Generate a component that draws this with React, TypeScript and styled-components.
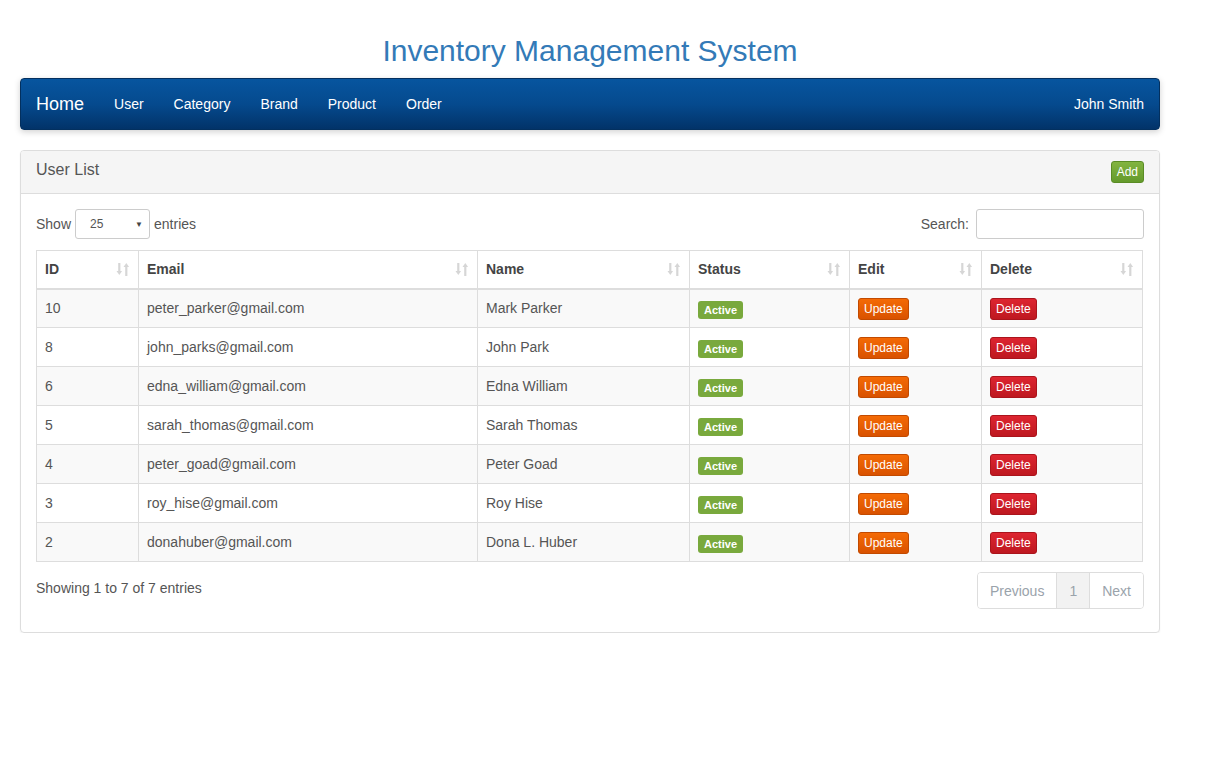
import styled, { createGlobalStyle } from "styled-components";

const GlobalStyle = createGlobalStyle`
  body {
    margin: 0;
    background: #fff;
    font-family: "Liberation Sans", Arial, sans-serif;
    font-size: 14px;
    color: #333;
  }
  * { box-sizing: border-box; }
`;

interface User {
  id: number;
  email: string;
  name: string;
}

const users: User[] = [
  { id: 10, email: "peter_parker@gmail.com", name: "Mark Parker" },
  { id: 8, email: "john_parks@gmail.com", name: "John Park" },
  { id: 6, email: "edna_william@gmail.com", name: "Edna William" },
  { id: 5, email: "sarah_thomas@gmail.com", name: "Sarah Thomas" },
  { id: 4, email: "peter_goad@gmail.com", name: "Peter Goad" },
  { id: 3, email: "roy_hise@gmail.com", name: "Roy Hise" },
  { id: 2, email: "donahuber@gmail.com", name: "Dona L. Huber" },
];

const columns = [
  { label: "ID", width: 102 },
  { label: "Email", width: 339 },
  { label: "Name", width: 212 },
  { label: "Status", width: 160 },
  { label: "Edit", width: 132 },
  { label: "Delete", width: 161 },
];

const navLinks = ["User", "Category", "Brand", "Product", "Order"];

const SortIcon = () => (
  <svg width="14" height="14" viewBox="0 0 14 14">
    <g fill="#d6d6d6">
      <rect x="2.2" y="1" width="2.2" height="9" />
      <polygon points="0.5,9 6.1,9 3.3,13" />
      <rect x="9.2" y="4" width="2.2" height="10" />
      <polygon points="7.5,5 13.1,5 10.3,1" />
    </g>
  </svg>
);

export default function App() {
  return (
    <>
      <GlobalStyle />
      <Page>
        <Title>Inventory Management System</Title>
        <Navbar>
          <NavLeft>
            <Brand>Home</Brand>
            {navLinks.map((l) => (
              <NavLink key={l}>{l}</NavLink>
            ))}
          </NavLeft>
          <NavLink>John Smith</NavLink>
        </Navbar>

        <Panel>
          <PanelHeading>
            <PanelTitle>User List</PanelTitle>
            <Btn $variant="add">Add</Btn>
          </PanelHeading>
          <PanelBody>
            <ControlsRow>
              <Control>
                Show
                <SelectBox>
                  <span>25</span>
                  <Caret>▼</Caret>
                </SelectBox>
                entries
              </Control>
              <Control>
                Search:
                <SearchInput />
              </Control>
            </ControlsRow>

            <Table>
              <colgroup>
                {columns.map((c) => (
                  <col key={c.label} style={{ width: c.width }} />
                ))}
              </colgroup>
              <thead>
                <tr>
                  {columns.map((c) => (
                    <Th key={c.label}>
                      <ThInner>
                        {c.label}
                        <SortIcon />
                      </ThInner>
                    </Th>
                  ))}
                </tr>
              </thead>
              <tbody>
                {users.map((u, i) => (
                  <Row key={u.id} $striped={i % 2 === 0}>
                    <Td>{u.id}</Td>
                    <Td>{u.email}</Td>
                    <Td>{u.name}</Td>
                    <Td $action>
                      <Label>Active</Label>
                    </Td>
                    <Td $action>
                      <Btn $variant="update">Update</Btn>
                    </Td>
                    <Td $action>
                      <Btn $variant="delete">Delete</Btn>
                    </Td>
                  </Row>
                ))}
              </tbody>
            </Table>

            <FooterRow>
              <Info>Showing 1 to 7 of 7 entries</Info>
              <Pagination>
                <PageItem>Previous</PageItem>
                <PageItem $active>1</PageItem>
                <PageItem>Next</PageItem>
              </Pagination>
            </FooterRow>
          </PanelBody>
        </Panel>
      </Page>
    </>
  );
}

const Page = styled.div`
  width: 1140px;
  margin-left: 20px;
  padding-top: 34px;
`;

const Title = styled.h1`
  margin: 0 0 11px;
  font-size: 30px;
  font-weight: 400;
  line-height: 33px;
  color: #337ab7;
  text-align: center;
`;

const Navbar = styled.nav`
  display: flex;
  justify-content: space-between;
  align-items: center;
  height: 52px;
  border: 1px solid #03305f;
  border-radius: 4px;
  background: linear-gradient(to bottom, #07559f 0%, #054a8e 50%, #023369 100%);
  box-shadow: 0 2px 6px rgba(0, 0, 0, 0.18);
  margin-bottom: 20px;
`;

const NavLeft = styled.div`
  display: flex;
  align-items: center;
`;

const Brand = styled.span`
  padding: 15px;
  font-size: 18px;
  line-height: 20px;
  color: #fff;
`;

const NavLink = styled.span`
  padding: 15px;
  font-size: 14px;
  line-height: 20px;
  color: #fff;
`;

const Panel = styled.div`
  border: 1px solid #ddd;
  border-radius: 4px;
  box-shadow: 0 1px 2px rgba(0, 0, 0, 0.06);
`;

const PanelHeading = styled.div`
  display: flex;
  justify-content: space-between;
  align-items: center;
  height: 43px;
  padding: 0 15px;
  background: #f5f5f5;
  border-bottom: 1px solid #ddd;
  border-radius: 3px 3px 0 0;
`;

const PanelTitle = styled.span`
  font-size: 16px;
  color: #555;
  margin-top: -4px;
`;

const PanelBody = styled.div`
  padding: 15px 15px 15px;
`;

const ControlsRow = styled.div`
  display: flex;
  justify-content: space-between;
  align-items: center;
  margin-bottom: 11px;
`;

const Control = styled.label`
  display: flex;
  align-items: center;
  gap: 4px;
  color: #555;
`;

const SelectBox = styled.div`
  display: flex;
  justify-content: space-between;
  align-items: center;
  width: 75px;
  height: 30px;
  padding: 0 6px 0 14px;
  border: 1px solid #ccc;
  border-radius: 3px;
  font-size: 12px;
  color: #555;
`;

const Caret = styled.span`
  font-size: 8px;
  color: #444;
`;

const SearchInput = styled.div`
  width: 168px;
  height: 30px;
  margin-left: 3px;
  border: 1px solid #ccc;
  border-radius: 3px;
`;

const Table = styled.table`
  width: 1106px;
  table-layout: fixed;
  border-collapse: collapse;
  border: 1px solid #ddd;
`;

const Th = styled.th`
  padding: 8px;
  height: 38px;
  text-align: left;
  font-weight: 700;
  color: #444;
  line-height: 20px;
  border: 1px solid #ddd;
  border-bottom: 2px solid #ddd;
`;

const ThInner = styled.div`
  display: flex;
  justify-content: space-between;
  align-items: center;
`;

const Row = styled.tr<{ $striped: boolean }>`
  background: ${(p) => (p.$striped ? "#f9f9f9" : "#fff")};
`;

const Td = styled.td<{ $action?: boolean }>`
  height: 39px;
  padding: ${(p) => (p.$action ? "2px 8px 0" : "0 8px")};
  vertical-align: middle;
  color: #555;
  line-height: 20px;
  border: 1px solid #ddd;
`;

const Label = styled.span`
  display: inline-block;
  height: 18px;
  padding: 0 6px;
  line-height: 18px;
  font-size: 11px;
  font-weight: 700;
  color: #fff;
  background: #79a93d;
  border-radius: 3px;
  vertical-align: middle;
`;

const btnColors = {
  add: { top: "#82b440", bottom: "#649a2c", border: "#5a8c25" },
  update: { top: "#f46a05", bottom: "#d95200", border: "#c24a00" },
  delete: { top: "#dd2530", bottom: "#be1820", border: "#aa141c" },
};

const Btn = styled.span<{ $variant: keyof typeof btnColors }>`
  display: inline-block;
  height: 22px;
  padding: 0 5px;
  line-height: 20px;
  font-size: 12px;
  color: #fff;
  border: 1px solid ${(p) => btnColors[p.$variant].border};
  border-radius: 3px;
  background: linear-gradient(
    to bottom,
    ${(p) => btnColors[p.$variant].top},
    ${(p) => btnColors[p.$variant].bottom}
  );
  vertical-align: middle;
`;

const FooterRow = styled.div`
  display: flex;
  justify-content: space-between;
  align-items: flex-start;
  margin-top: 10px;
  padding-bottom: 8px;
`;

const Info = styled.div`
  padding-top: 8px;
  color: #555;
`;

const Pagination = styled.div`
  display: flex;
  border: 1px solid #ddd;
  border-radius: 4px;
  overflow: hidden;
`;

const PageItem = styled.span<{ $active?: boolean }>`
  padding: 8px 12px 7px;
  line-height: 20px;
  color: #9aa3ab;
  background: ${(p) => (p.$active ? "#f2f2f2" : "#fff")};
  & + & {
    border-left: 1px solid #ddd;
  }
`;
